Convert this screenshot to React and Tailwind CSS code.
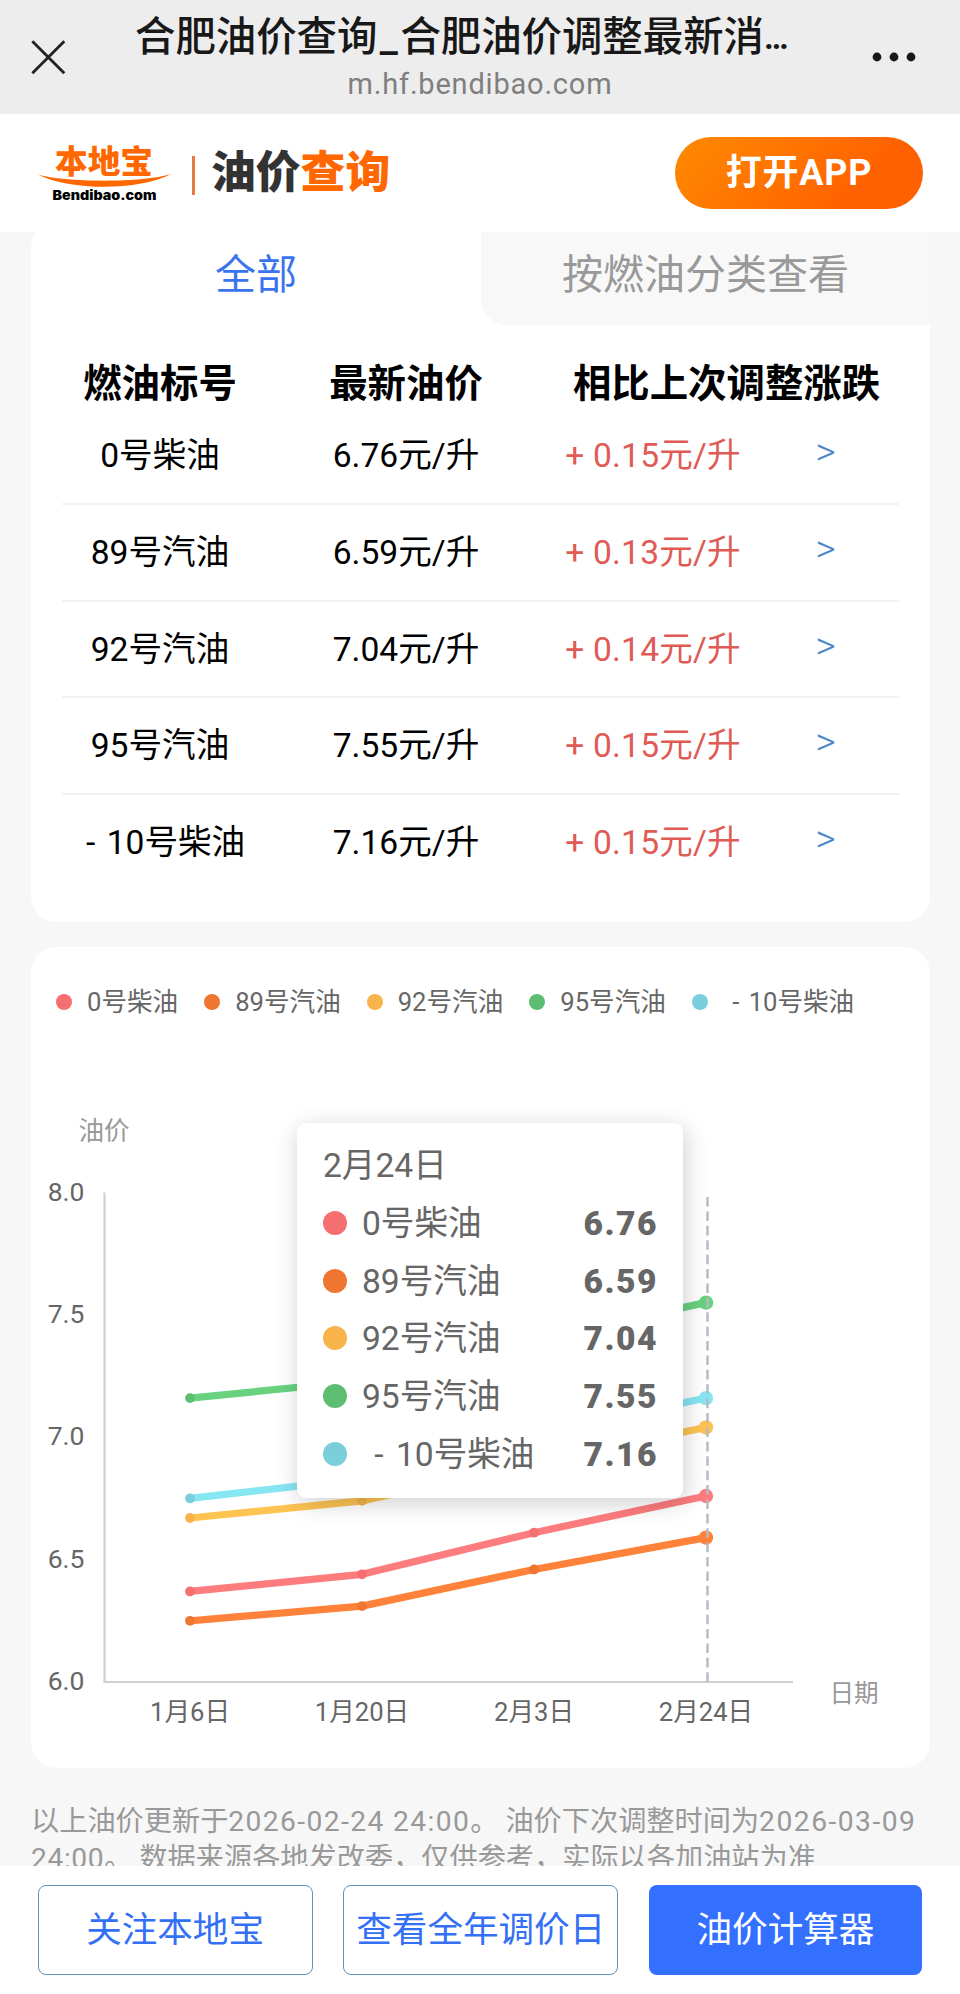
import { useState } from "react";

const series = [
  { name: "0号柴油", price: "6.76", diff: "+ 0.15", color: "#f56f71", line: "#fd7c7e", data: [6.37, 6.44, 6.61, 6.76] },
  { name: "89号汽油", price: "6.59", diff: "+ 0.13", color: "#ee7631", line: "#fe8239", data: [6.25, 6.31, 6.46, 6.59] },
  { name: "92号汽油", price: "7.04", diff: "+ 0.14", color: "#f8b34b", line: "#fec452", data: [6.67, 6.74, 6.9, 7.04] },
  { name: "95号汽油", price: "7.55", diff: "+ 0.15", color: "#5dbe72", line: "#68d27f", data: [7.16, 7.23, 7.4, 7.55] },
  { name: " - 10号柴油", price: "7.16", diff: "+ 0.15", color: "#7acfdb", line: "#86e6f2", data: [6.75, 6.83, 7.01, 7.16] },
];

const dates = ["1月6日", "1月20日", "2月3日", "2月24日"];
const ticks = ["8.0", "7.5", "7.0", "6.5", "6.0"];

const px = (i) => 159 + i * 172;
const py = (v) => 735 - (v - 6) * 244.75;

function TopBar() {
  return (
    <header className="flex h-[114px] items-center bg-[#ededed] text-[#181818]">
      <svg className="ml-[30px] h-9 w-9" viewBox="0 0 36 36" fill="none" stroke="#222" strokeWidth="2.8">
        <path d="M2.3 2.3 34.3 34.3M34.3 2.3 2.3 34.3" />
      </svg>
      <div className="ml-[68px] flex w-[656px] flex-col items-center">
        <h1 className="flex h-[58px] items-center whitespace-nowrap text-[40.4px] font-medium leading-[58px]">
          合肥油价查询
          <span className="inline-block w-[23px] text-center">_</span>
          合肥油价调整最新消
          <span className="inline-block w-[25px] text-[33px] font-bold">…</span>
        </h1>
        <p className="ml-[36px] h-[38px] text-[29px] leading-[34px] tracking-[0.8px] text-[#7f7f7f]">m.hf.bendibao.com</p>
      </div>
      <svg className="ml-[81px] h-3 w-[46px]" viewBox="0 0 46 12" fill="#181818">
        <circle cx="6" cy="6" r="4.4" />
        <circle cx="23" cy="6" r="4.4" />
        <circle cx="40" cy="6" r="4.4" />
      </svg>
    </header>
  );
}

function Logo() {
  return (
    <svg className="h-[64px] w-[136px]" viewBox="0 0 136 64">
      <text x="18" y="32" textLength="98" lengthAdjust="spacingAndGlyphs" fontSize="32" fontWeight="900" fill="#ff6700">
        本地宝
      </text>
      <path d="M1 33.5C28 41.5 106 42 134 33C104 49.500 34 50.500 1 33.500Z" fill="#ff6700" />
      <text x="15.500" y="59" textLength="104" lengthAdjust="spacingAndGlyphs" fontSize="13" fontWeight="900" fontFamily="Inter, sans-serif" fill="#000">
        Bendibao.com
      </text>
    </svg>
  );
}

function NavBar() {
  return (
    <nav className="relative z-10 flex h-[118px] items-center bg-white pl-[37px] pr-[37px]">
      <Logo />
      <div className="ml-[19px] mt-[4px] h-[39px] w-[2.5px] bg-[#e87a3f]"></div>
      <div className="ml-[16.5px] mt-[-1px] text-[44.8px] font-black leading-[60px] text-[#333]">
        油价<span className="text-[#ff6700]">查询</span>
      </div>
      <button className="ml-auto h-[72px] w-[248px] rounded-full bg-linear-135 from-[#ff8a00] to-[#ff6000] to-75% text-[36px] font-bold leading-[70px] tracking-[0.8px] text-white">
        打开APP
      </button>
    </nav>
  );
}

function PriceCard() {
  const [tab, setTab] = useState(0);
  return (
    <section className="-mt-[11px] h-[701px] rounded-[26px] bg-white">
      <div className="flex h-[104px] text-center text-[41px] leading-[108px]">
        <button onClick={() => setTab(0)} className="w-[450px] text-[#3a73ee]">
          全部
        </button>
        <button onClick={() => setTab(1)} className="flex-1 rounded-bl-[26px] rounded-tr-[26px] bg-[#f8f8f8] text-[#999]">
          按燃油分类查看
        </button>
      </div>
      <div className="px-[31px] text-black">
        <div className="grid h-[83px] grid-cols-[196px_296px_1fr] text-center text-[38.4px] font-bold leading-[117px]">
          <span>燃油标号</span>
          <span>最新油价</span>
          <span>相比上次调整涨跌</span>
        </div>
        {series.map((s) => (
          <div
            key={s.name}
            className="grid h-[96.8px] grid-cols-[196px_296px_198px_1fr] border-b-2 border-[#f2f2f2] text-center text-[33.6px] leading-[96px] last:border-0"
          >
            <span className="whitespace-pre [word-spacing:3px]">{s.name}</span>
            <span>{s.price}元/升</span>
            <span className="tracking-[0.2px] text-[#e05b56]">{s.diff}元/升</span>
            <span className="text-[39px] font-light leading-[88px] text-[#4a88c8]">&gt;</span>
          </div>
        ))}
      </div>
    </section>
  );
}

function Tooltip() {
  return (
    <div className="absolute left-[266px] top-[176px] h-[375px] w-[386px] rounded-[9px] bg-white pl-[26px] pr-[26px] pt-[14px] text-[33.6px] text-[#666] shadow-[2px_5px_24px_rgba(0,0,0,0.2)]">
      <p className="h-[57px] leading-[58px]">2月24日</p>
      {series.map((s) => (
        <div key={s.name} className="flex h-[57.7px] items-center leading-[57px]">
          <span className="mr-[15px] h-6 w-6 rounded-full" style={{ backgroundColor: s.color }}></span>
          <span className="mt-px whitespace-pre [word-spacing:4px]">{s.name}</span>
          <span className="-mr-px ml-auto mt-px font-black tracking-[1.5px]">{s.price}</span>
        </div>
      ))}
    </div>
  );
}

function ChartCard() {
  return (
    <section className="relative mt-[25px] h-[821px] rounded-[26px] bg-white">
      <div className="flex h-[110px] items-center pl-[25px] text-[25.6px] text-[#666]">
        {series.map((s) => (
          <div key={s.name} className="mr-[26px] flex items-center">
            <span className="mr-[15px] h-4 w-4 rounded-full" style={{ backgroundColor: s.color }}></span>
            <span className="mt-px whitespace-pre [word-spacing:3px]">{s.name}</span>
          </div>
        ))}
      </div>
      <svg className="-mt-[110px] block h-[821px] w-[899px]" viewBox="0 0 899 821" fontSize="25.6" fill="#666">
        <text x="73" y="193" textAnchor="middle" fill="#999">油价</text>
        <text x="823" y="755" textAnchor="middle" fill="#999" fontSize="24.6">日期</text>
        {ticks.map((t, i) => (
          <text key={t} x="53.500" y={253.5 + i * 122.4} textAnchor="end" fontSize="26.500">
            {t}
          </text>
        ))}
        {dates.map((d, i) => (
          <text key={d} x={px(i)} y="774" textAnchor="middle">{d}</text>
        ))}
        <path d="M73.500 245.500V735H762" fill="none" stroke="#d0d0d0" strokeWidth="2.2" />
        {series.map((s) => (
          <g key={s.name}>
            <polyline
              points={s.data.map((v, i) => `${px(i)},${py(v)}`).join(" ")}
              fill="none"
              stroke={s.line}
              strokeWidth="7.2"
              strokeLinejoin="bevel"
            />
            {s.data.map((v, i) => (
              <circle key={i} cx={px(i)} cy={py(v)} r={i === 3 ? 7.2 : 4.9} fill={i === 3 ? s.line : s.color} />
            ))}
          </g>
        ))}
        <path d="M676.500 250V735" stroke="#b5bac5" strokeWidth="2.4" strokeDasharray="9.6 4.8" />
      </svg>
      <Tooltip />
    </section>
  );
}

function BottomBar() {
  return (
    <footer className="absolute bottom-0 left-0 z-10 flex h-[128px] w-full gap-[30.5px] bg-white pl-[37.5px] pr-[38px] pt-[19px] text-[35.6px] leading-[86px]">
      <button className="h-[90px] flex-1 rounded-[8px] border border-[#6390bd] text-[#3370f5]">关注本地宝</button>
      <button className="h-[90px] flex-1 rounded-[8px] border border-[#6390bd] text-[#3370f5]">查看全年调价日</button>
      <button className="h-[90px] flex-1 rounded-[8px] bg-[#3370ff] text-white">油价计算器</button>
    </footer>
  );
}

export default function App() {
  return (
    <div className="relative h-[1994px] w-[960px] overflow-hidden bg-[#f7f7f7] font-[Roboto,'Noto_Sans_CJK_SC',sans-serif]">
      <TopBar />
      <NavBar />
      <main className="pl-[31px] pr-[30px]">
        <PriceCard />
        <ChartCard />
        <p className="mt-[36px] whitespace-nowrap text-[28.2px] leading-[36.7px] text-[#999]">
          以上油价更新于<span className="tracking-[1.4px]">2026-02-24 24:00</span>。 油价下次调整时间为
          <span className="tracking-[1.5px]">2026-03-09</span>
          <br />
          <span className="tracking-[0.6px]">24:00</span>。 数据来源各地发改委，仅供参考，实际以各加油站为准
        </p>
      </main>
      <BottomBar />
    </div>
  );
}
